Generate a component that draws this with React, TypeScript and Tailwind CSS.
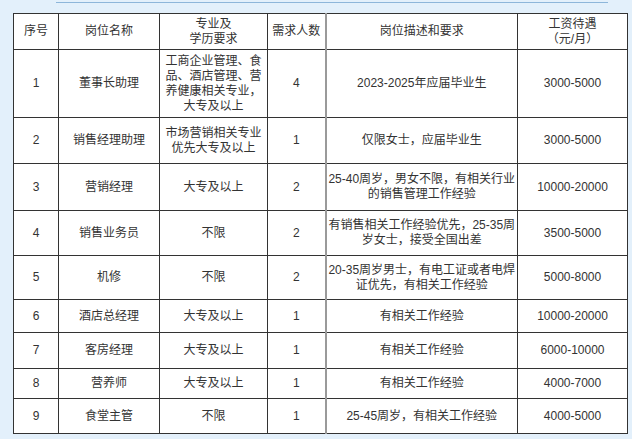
const rows = [
  { no: '1', name: '董事长助理', major: ['工商企业管理、食', '品、酒店管理、营', '养健康相关专业，', '大专及以上'], num: '4', desc: ['2023-2025年应届毕业生'], pay: '3000-5000', h: 'h-[68px]' },
  { no: '2', name: '销售经理助理', major: ['市场营销相关专业', '优先大专及以上'], num: '1', desc: ['仅限女士，应届毕业生'], pay: '3000-5000', h: 'h-[46px]' },
  { no: '3', name: '营销经理', major: ['大专及以上'], num: '2', desc: ['25-40周岁，男女不限，有相关行业', '的销售管理工作经验'], pay: '10000-20000', h: 'h-[47px]' },
  { no: '4', name: '销售业务员', major: ['不限'], num: '2', desc: ['有销售相关工作经验优先，25-35周', '岁女士，接受全国出差'], pay: '3500-5000', h: 'h-[45px]' },
  { no: '5', name: '机修', major: ['不限'], num: '2', desc: ['20-35周岁男士，有电工证或者电焊', '证优先，有相关工作经验'], pay: '5000-8000', h: 'h-[44px]' },
  { no: '6', name: '酒店总经理', major: ['大专及以上'], num: '1', desc: ['有相关工作经验'], pay: '10000-20000', h: 'h-[33px]' },
  { no: '7', name: '客房经理', major: ['大专及以上'], num: '1', desc: ['有相关工作经验'], pay: '6000-10000', h: 'h-[36px]' },
  { no: '8', name: '营养师', major: ['大专及以上'], num: '1', desc: ['有相关工作经验'], pay: '4000-7000', h: 'h-[30px]' },
  { no: '9', name: '食堂主管', major: ['不限'], num: '1', desc: ['25-45周岁，有相关工作经验'], pay: '4000-5000', h: 'h-[35px]' },
]

function Lines({ items }: { items: string[] }) {
  return (
    <>
      {items.map((t, i) => (
        <div key={i}>{t}</div>
      ))}
    </>
  )
}

const cell = 'border border-[#333] p-0 text-center align-middle'
const descCell = 'border border-[#333] border-l-2 border-l-[#9a9a9a] p-0 text-center align-middle'

export default function App() {
  return (
    <div className="h-[439px] w-[632px] overflow-hidden bg-[#e3f0fb] font-['Liberation_Sans','Noto_Sans_CJK_SC',sans-serif] text-[12px] leading-[15px] text-[#333]">
      <div className="ml-[56px] mt-[2px] h-px w-[552px] bg-[#8db6da]" />
      <div className="ml-[13px] mt-[10px]">
        <table className="w-[614px] table-fixed border-collapse bg-white">
          <colgroup>
            <col className="w-[45px]" />
            <col className="w-[101px]" />
            <col className="w-[108px]" />
            <col className="w-[58px]" />
            <col className="w-[192px]" />
            <col className="w-[110px]" />
          </colgroup>
          <thead>
            <tr className="h-[36px]">
              <th className={`${cell} font-normal`}>序号</th>
              <th className={`${cell} font-normal`}>岗位名称</th>
              <th className={`${cell} font-normal`}>
                <Lines items={['专业及', '学历要求']} />
              </th>
              <th className={`${cell} font-normal`}>需求人数</th>
              <th className={`${descCell} font-normal`}>岗位描述和要求</th>
              <th className={`${cell} font-normal`}>
                <Lines items={['工资待遇', '（元/月）']} />
              </th>
            </tr>
          </thead>
          <tbody>
            {rows.map((r) => (
              <tr key={r.no} className={r.h}>
                <td className={cell}>{r.no}</td>
                <td className={cell}>{r.name}</td>
                <td className={cell}>
                  <Lines items={r.major} />
                </td>
                <td className={cell}>{r.num}</td>
                <td className={descCell}>
                  <Lines items={r.desc} />
                </td>
                <td className={cell}>{r.pay}</td>
              </tr>
            ))}
          </tbody>
        </table>
      </div>
    </div>
  )
}
